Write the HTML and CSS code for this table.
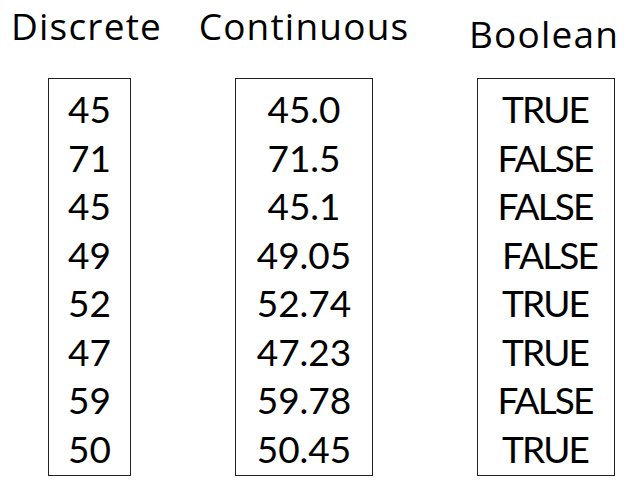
FILE: index.html
```html
<!DOCTYPE html>
<html>
<head>
<meta charset="utf-8">
<link rel="stylesheet" href="styles.css">
</head>
<body>
<div class="page">
  <div class="col col-discrete">
    <div class="head">Discrete</div>
    <div class="box box-narrow">
      <div class="cell">45</div>
      <div class="cell">71</div>
      <div class="cell">45</div>
      <div class="cell">49</div>
      <div class="cell">52</div>
      <div class="cell">47</div>
      <div class="cell">59</div>
      <div class="cell">50</div>
    </div>
  </div>
  <div class="col col-continuous">
    <div class="head">Continuous</div>
    <div class="box">
      <div class="cell">45.0</div>
      <div class="cell">71.5</div>
      <div class="cell">45.1</div>
      <div class="cell">49.05</div>
      <div class="cell">52.74</div>
      <div class="cell">47.23</div>
      <div class="cell">59.78</div>
      <div class="cell">50.45</div>
    </div>
  </div>
  <div class="col col-boolean">
    <div class="head head-low">Boolean</div>
    <div class="box">
      <div class="cell cell-word">TRUE</div>
      <div class="cell cell-word">FALSE</div>
      <div class="cell cell-word">FALSE</div>
      <div class="cell cell-word cell-shift">FALSE</div>
      <div class="cell cell-word">TRUE</div>
      <div class="cell cell-word">TRUE</div>
      <div class="cell cell-word">FALSE</div>
      <div class="cell cell-word">TRUE</div>
    </div>
  </div>
</div>
</body>
</html>
```

FILE: styles.css
```css
html, body {
  margin: 0;
  padding: 0;
  background: #ffffff;
}

.page {
  display: flex;
  align-items: flex-start;
  width: 644px;
  height: 496px;
  font-family: "Lato", "Open Sans", sans-serif;
  color: #000;
}

.col {
  display: flex;
  flex-direction: column;
  align-items: center;
  width: 180px;
}

.col-discrete {
  width: 179px;
}

.col-continuous {
  margin-left: 35px;
}

.col-boolean {
  margin-left: 62px;
}

.head {
  height: 78px;
  box-sizing: border-box;
  padding-top: 1px;
  font-family: "Open Sans", "Lato", sans-serif;
  font-size: 37px;
  line-height: 50px;
  letter-spacing: 1.2px;
  white-space: nowrap;
}

.col-discrete .head {
  margin-right: 6px;
}

.head-low {
  padding-top: 9px;
  margin-right: 4px;
}

.box {
  width: 138px;
  height: 398px;
  box-sizing: border-box;
  border: 1px solid #222;
  padding-top: 6px;
  display: flex;
  flex-direction: column;
}

.box-narrow {
  width: 83px;
}

.cell {
  height: 48.5px;
  line-height: 48.5px;
  font-size: 37px;
  text-align: center;
}

.cell-word {
  letter-spacing: -1.9px;
  padding-right: 2px;
}

.cell-shift {
  padding-left: 9px;
}
```
